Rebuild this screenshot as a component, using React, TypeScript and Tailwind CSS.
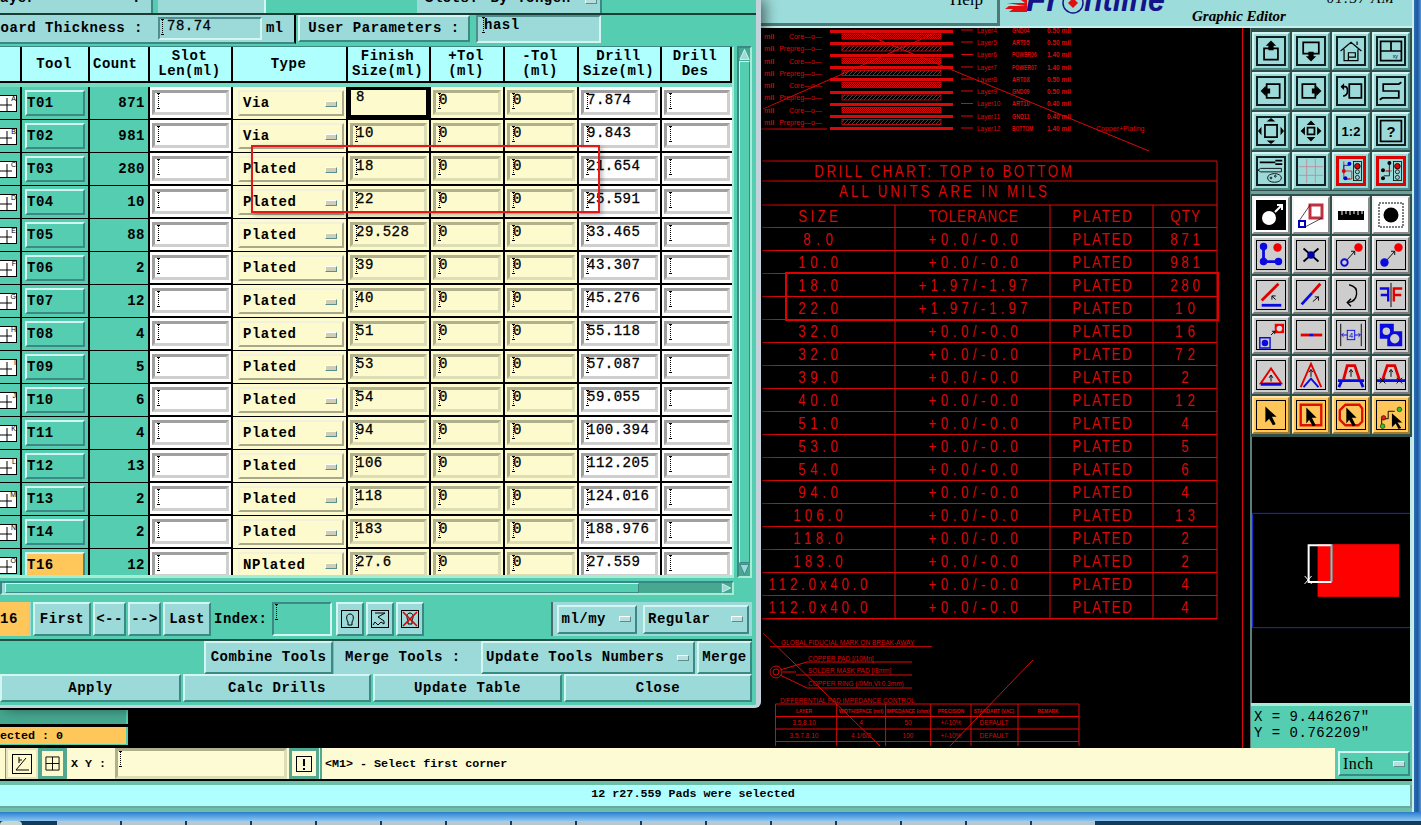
import type { ReactNode } from "react";

const RED = "#dc0808";
const BLUE = "#0a0ae0";

const raised = "border-2 border-t-[#d4f6f2] border-l-[#d4f6f2] border-b-[#3c8884] border-r-[#3c8884]";
const teal = "bg-[#54cdb0]";
const btnBg = "bg-[#9cd9d9]";

const rows = [
  ["T01", "871", "Via", "8", "7.874"],
  ["T02", "981", "Via", "10", "9.843"],
  ["T03", "280", "Plated", "18", "21.654"],
  ["T04", "10", "Plated", "22", "25.591"],
  ["T05", "88", "Plated", "29.528", "33.465"],
  ["T06", "2", "Plated", "39", "43.307"],
  ["T07", "12", "Plated", "40", "45.276"],
  ["T08", "4", "Plated", "51", "55.118"],
  ["T09", "5", "Plated", "53", "57.087"],
  ["T10", "6", "Plated", "54", "59.055"],
  ["T11", "4", "Plated", "94", "100.394"],
  ["T12", "13", "Plated", "106", "112.205"],
  ["T13", "2", "Plated", "118", "124.016"],
  ["T14", "2", "Plated", "183", "188.976"],
  ["T16", "12", "NPlated", "27.6", "27.559"],
];

const gridCols = "grid grid-cols-[22px_68px_60px_83px_115px_83px_74px_74px_83px_70px]";
const valueText = "text-[14px] leading-[15px] tracking-[0.5px] [-webkit-text-stroke:0.3px_#000]";

const Caret = () => (
  <svg viewBox="0 0 5 16" className="w-[5px] h-[16px] shrink-0">
    <path d="M2.5 1V15" stroke="#000" strokeDasharray="1 1" />
    <path d="M1 .5h3M1 15.5h3" stroke="#000" />
  </svg>
);

const Menu = ({ light }: { light?: boolean }) => (
  <span className={`block w-[12px] h-[6px] shrink-0 border border-t-white border-l-white border-b-[#5b8f8c] border-r-[#5b8f8c] ${light ? "bg-[#cfcfb8]" : "bg-[#b8dede]"}`} />
);

const Field = ({ value, white, focus }: { value?: string; white?: boolean; focus?: boolean }) => {
  if (focus) {
    return (
      <div className={`flex-1 h-full border-[3px] border-black bg-[#fdfbce] pl-[5px] ${valueText}`}>{value}</div>
    );
  }
  return (
    <div className={`flex-1 h-[25px] my-[3px] mx-[2px] pl-[1px] flex items-start border-[3px] ${white ? "bg-white border-t-[#a0a0a0] border-l-[#a0a0a0] border-b-[#cfcfcf] border-r-[#cfcfcf]" : "bg-[#fdfbce] border-t-[#b0b08c] border-l-[#b0b08c] border-b-[#dedeb4] border-r-[#dedeb4]"}`}>
      <Caret />
      <span className={`${valueText} -ml-[3px]`}>{value}</span>
    </div>
  );
};

const Btn = ({ className, children }: { className: string; children: ReactNode }) => (
  <div className={`${raised} ${btnBg} flex items-center justify-center font-bold text-[14px] tracking-[0.5px] whitespace-nowrap ${className}`}>{children}</div>
);

const HeaderCell = ({ a, b, className = "items-center" }: { a?: string; b?: string; className?: string }) => (
  <div className={`border-r-2 border-black flex flex-col justify-center font-bold text-[14px] leading-[15px] tracking-[0.5px] pr-[2px] ${className}`}>
    {a && <span>{a}</span>}
    {b && <span>{b}</span>}
  </div>
);

const ToolRow = ({ r, i }: { r: string[]; i: number }) => {
  const letter = "ABCDEFGHIJKLMNOP"[i];
  return (
    <div className={`${gridCols} h-[33px] border-b-2 border-black`}>
      <div className={`${teal} border-r-2 border-black flex items-center overflow-hidden`}>
        <div className="relative -ml-[2px] shrink-0 w-[19px] h-[17px] bg-white border border-black flex items-center justify-center">
          <svg viewBox="0 0 17 15" className="w-[17px] h-[15px]"><path d="M8 2V15M1 9H13" stroke="#000" /></svg>
          <span className="absolute right-0 -top-[1px] text-[7px] leading-[8px] font-['Liberation_Sans',sans-serif]">{letter}</span>
        </div>
      </div>
      <div className={`${teal} border-r-2 border-black p-[3px]`}>
        <div className={`${raised} ${r[0] === "T16" ? "bg-[#ffc65a]" : teal} h-full flex items-center pt-[1px] font-bold text-[14px] tracking-[0.5px]`}>{r[0]}</div>
      </div>
      <div className={`${teal} border-r-2 border-black flex items-center justify-end pt-[1px] pr-[3px] font-bold text-[14px] tracking-[0.5px]`}>{r[1]}</div>
      <div className="bg-white border-r-2 border-black flex h-[31px]"><Field white /></div>
      <div className="bg-[#fdfbce] border-r-2 border-black p-[3px] pl-[5px] pr-[2px]">
        <div className="h-full border-2 border-t-[#f2f2dc] border-l-[#f2f2dc] border-b-[#a8a88a] border-r-[#a8a88a] flex items-center justify-between pl-[3px] pt-[1px] pr-[5px] font-bold text-[14px] tracking-[0.5px]">
          <span>{r[2]}</span>
          <Menu light />
        </div>
      </div>
      <div className="bg-[#fdfbce] border-r-2 border-black flex h-[31px]"><Field value={r[3]} focus={i === 0} /></div>
      <div className="bg-[#fdfbce] border-r-2 border-black flex h-[31px]"><Field value="0" /></div>
      <div className="bg-[#fdfbce] border-r-2 border-black flex h-[31px]"><Field value="0" /></div>
      <div className="bg-white border-r-2 border-black flex h-[31px]"><Field value={r[4]} white /></div>
      <div className="bg-white flex h-[31px]"><Field white /></div>
    </div>
  );
};

const Dialog = () => (
  <div className="absolute left-0 top-0 w-[761px] h-[708px] flex flex-col bg-[#54cdb0] border-r-[5px] border-b-[3px] border-r-[#c4d2dc] border-b-[#c4d2dc] rounded-br-[6px] shadow-[4px_0_14px_rgba(0,0,0,0.55)] overflow-hidden text-black">
    <div className="h-[15px] flex border-b-2 border-black/70 overflow-hidden shrink-0">
      <div className={`${btnBg} w-[153px] border-r-2 border-[#3c8884] flex justify-between pr-[10px] font-bold text-[14px] tracking-[0.5px] leading-[16px] -mt-[10px] h-[24px]`}>
        <span>ayer</span><span>:</span>
      </div>
      <div className={`${btnBg} w-[108px] ml-[5px] border-r-2 border-[#d4f6f2]`} />
      <div className={`${btnBg} w-[185px] ml-[151px] border-r-2 border-[#3c8884] flex font-bold text-[14px] tracking-[0.5px] leading-[16px] -mt-[10px] h-[24px] pl-[8px] items-start gap-[12px]`}>
        <span>Slots:</span><span>By Tongen</span>
        <span className="mt-[8px] ml-[2px]"><Menu /></span>
      </div>
    </div>
    <div className="h-[29px] flex shrink-0 items-stretch">
      <div className={`${btnBg} w-[155px] flex items-center font-bold text-[14px] tracking-[0.5px] justify-end pr-[12px] border-b-2 border-[#3c8884] whitespace-nowrap`}>oard Thickness :</div>
      <div className={`${btnBg} w-[141px] flex items-center border-r-2 border-black border-b-2 border-b-[#3c8884]`}>
        <div className="w-[104px] h-[23px] ml-[3px] bg-[#9cd9d9] border-2 border-t-[#4f8e8c] border-l-[#4f8e8c] border-b-[#d4f6f2] border-r-[#d4f6f2] flex items-start">
          <Caret />
          <span className={`${valueText} ml-[2px]`}>78.74</span>
        </div>
        <span className="ml-[4px] font-bold text-[14px]">ml</span>
      </div>
      <Btn className="w-[172px] h-[27px] ml-[2px]">User Parameters :</Btn>
      <div className={`${btnBg} ml-[6px] w-[125px] h-[28px] border-2 border-t-[#4f8e8c] border-l-[#4f8e8c] border-b-[#d4f6f2] border-r-[#d4f6f2] flex items-start pl-[3px]`}>
        <Caret />
        <span className="text-[14px] font-bold leading-[16px] tracking-[0.5px] -ml-[2px]">hasl</span>
      </div>
    </div>
    <div className="flex mt-[2px] h-[532px] shrink-0">
      <div className="w-[734px] border-t border-[#3c8884] border-r-2 border-r-[#a8ecd8] border-b-[3px] border-b-[#a8ecd8]">
        <div className={`${gridCols} h-[36px] bg-[#afffff] border-b-2 border-black`}>
          <HeaderCell />
          <HeaderCell a="Tool" />
          <HeaderCell a="Count" className="items-start pl-[3px]" />
          <HeaderCell a="Slot" b="Len(ml)" />
          <HeaderCell a="Type" />
          <HeaderCell a="Finish" b="Size(ml)" />
          <HeaderCell a="+Tol" b="(ml)" />
          <HeaderCell a="-Tol" b="(ml)" />
          <HeaderCell a="Drill" b="Size(ml)" />
          <HeaderCell a="Drill" b="Des" />
        </div>
        <div className="h-[4px] bg-[#74dcc2]" />
        <div className="h-[488px] overflow-hidden">
          {rows.map((r, i) => <ToolRow key={r[0]} r={r} i={i} />)}
        </div>
      </div>
      <div className="w-[15px] ml-[3px] border-2 border-t-[#3c8884] border-l-[#3c8884] border-b-[#a8ecd8] border-r-[#a8ecd8] flex flex-col bg-[#46a890]">
        <svg viewBox="0 0 12 13" className="w-[11px] h-[13px]"><path d="M6 1 11 12H1Z" fill="#9cd9d9" stroke="#d4f6f2" /></svg>
        <div className={`flex-1 ${teal} border border-t-[#d4f6f2] border-l-[#d4f6f2] border-b-[#3c8884] border-r-[#3c8884]`} />
        <svg viewBox="0 0 12 13" className="w-[11px] h-[13px]"><path d="M6 12 11 1H1Z" fill="#9cd9d9" stroke="#3c8884" /></svg>
      </div>
    </div>
    <div className="h-[14px] mt-[3px] w-[734px] shrink-0 flex border-2 border-t-[#3c8884] border-l-[#3c8884] border-b-[#a8ecd8] border-r-[#a8ecd8] bg-[#46a890]">
      <div className="w-[3px] bg-[#9cd9d9]" />
      <div className={`w-[634px] ${teal} border border-t-[#d4f6f2] border-l-[#d4f6f2] border-b-[#3c8884] border-r-[#3c8884]`} />
      <div className="flex-1" />
      <svg viewBox="0 0 12 12" className="w-[11px] h-[10px]"><path d="M1 1 11 6 1 11Z" fill="#9cd9d9" stroke="#d4f6f2" /></svg>
    </div>
    <div className="flex items-stretch h-[35px] w-[752px] mt-[6px] pt-[1px] shrink-0">
      <div className="w-[31px] bg-[#ffc65a] border-r-2 border-[#9cd9d9] flex items-center font-bold text-[14px] tracking-[0.5px]">16</div>
      <Btn className="w-[58px] ml-[2px]">First</Btn>
      <Btn className="w-[33px] ml-[2px]">{"<--"}</Btn>
      <Btn className="w-[33px] ml-[2px]">{"-->"}</Btn>
      <Btn className="w-[48px] ml-[2px]">Last</Btn>
      <div className="w-[58px] ml-[3px] flex items-center font-bold text-[14px] tracking-[0.5px]">Index:</div>
      <div className="w-[60px] border-2 border-t-[#3c8884] border-l-[#3c8884] border-b-[#d4f6f2] border-r-[#d4f6f2] flex items-start"><Caret /></div>
      <div className="ml-[4px] flex gap-[2px]">
        <div className={`${raised} ${btnBg} w-[28px] flex items-center justify-center`}>
          <svg viewBox="0 0 18 18" className="w-[18px] h-[18px]" fill="none" stroke="#000"><rect x=".5" y=".5" width="17" height="17" /><path d="M7 12C5 9 5 4 9 4s4 5 2 8v3H7Z" /></svg>
        </div>
        <div className={`${raised} ${btnBg} w-[28px] flex items-center justify-center`}>
          <svg viewBox="0 0 18 18" className="w-[18px] h-[18px]" fill="none" stroke="#000"><rect x=".5" y=".5" width="17" height="17" /><path d="M4 3H14L7 7 13 11V14L10 12 7 15 4 12 2 15" /></svg>
        </div>
        <div className={`${raised} ${btnBg} w-[28px] flex items-center justify-center`}>
          <svg viewBox="0 0 18 18" className="w-[18px] h-[18px]" fill="none" stroke="#000"><rect x=".5" y=".5" width="17" height="17" /><path d="M7 10C5 7 6 3 9 3s4 4 2 7v4H7Z" /><path d="M2 2 16 16M16 2 2 16" stroke="#e00000" strokeWidth="1.6" /></svg>
        </div>
      </div>
      <div className="flex-1" />
      <div className={`${btnBg} w-[89px] border-l-2 border-black/50 flex items-center justify-center`}>
        <div className={`${raised} w-[80px] h-[29px] flex items-center justify-between pl-[3px] pr-[4px] font-bold text-[14px] tracking-[0.5px]`}>ml/my <Menu /></div>
      </div>
      <div className={`${btnBg} w-[112px] flex items-center justify-center`}>
        <div className={`${raised} w-[106px] h-[29px] flex items-center justify-between pl-[3px] pr-[4px] font-bold text-[14px] tracking-[0.5px]`}>Regular <Menu /></div>
      </div>
    </div>
    <div className="h-[5px] border-b-2 border-black/60 shrink-0 w-[752px]" />
    <div className="flex h-[33px] shrink-0 w-[752px]">
      <div className="w-[204px]" />
      <Btn className="w-[129px]">Combine Tools</Btn>
      <div className={`${btnBg} w-[147px] ml-[1px] flex items-center pl-[11px] font-bold text-[14px] tracking-[0.5px]`}>Merge Tools :</div>
      <div className={`${btnBg} flex-1 flex`}>
        <div className={`${raised} w-[214px] flex items-center justify-between pl-[3px] pr-[4px] font-bold text-[14px] tracking-[0.5px]`}>Update Tools Numbers <Menu /></div>
        <Btn className="flex-1 ml-[2px]">Merge</Btn>
      </div>
    </div>
    <div className="flex h-[28px] gap-[2px] shrink-0 w-[752px]">
      <Btn className="w-[181px]">Apply</Btn>
      <Btn className="w-[188px]">Calc Drills</Btn>
      <Btn className="w-[189px]">Update Table</Btn>
      <Btn className="flex-1">Close</Btn>
    </div>
  </div>
);

const chart: [string, string, string, string][] = [
  ["SIZE", "TOLERANCE", "PLATED", "QTY"],
  ["8.0", "+0.0/-0.0", "PLATED", "871"],
  ["10.0", "+0.0/-0.0", "PLATED", "981"],
  ["18.0", "+1.97/-1.97", "PLATED", "280"],
  ["22.0", "+1.97/-1.97", "PLATED", "10"],
  ["32.0", "+0.0/-0.0", "PLATED", "16"],
  ["32.0", "+0.0/-0.0", "PLATED", "72"],
  ["39.0", "+0.0/-0.0", "PLATED", "2"],
  ["40.0", "+0.0/-0.0", "PLATED", "12"],
  ["51.0", "+0.0/-0.0", "PLATED", "4"],
  ["53.0", "+0.0/-0.0", "PLATED", "5"],
  ["54.0", "+0.0/-0.0", "PLATED", "6"],
  ["94.0", "+0.0/-0.0", "PLATED", "4"],
  ["106.0", "+0.0/-0.0", "PLATED", "13"],
  ["118.0", "+0.0/-0.0", "PLATED", "2"],
  ["183.0", "+0.0/-0.0", "PLATED", "2"],
  ["112.0x40.0", "+0.0/-0.0", "PLATED", "4"],
  ["112.0x40.0", "+0.0/-0.0", "PLATED", "4"],
];

const stackRight = [
  [31, "Layer4", "GND04", "0.50 mil"],
  [43, "Layer5", "ART05", "0.50 mil"],
  [55.5, "Layer6", "POWER06", "1.40 mil"],
  [68, "Layer7", "POWER07", "1.40 mil"],
  [80, "Layer8", "ART08", "0.50 mil"],
  [92, "Layer9", "GND09", "0.50 mil"],
  [104.5, "Layer10", "ART10", "0.40 mil"],
  [117, "Layer11", "GND11", "0.40 mil"],
  [129, "Layer12", "BOTTOM", "1.40 mil"],
] as const;

// plotter lettering: narrow glyphs on a 10px pitch
const Plot = ({ x, y, t }: { x: number; y: number; t: string }) => (
  <text transform={`translate(${x} ${y}) scale(0.78 1)`} textAnchor="middle" textLength={(t.length * 9.9) / 0.78} lengthAdjust="spacing" fontSize="17" fill={RED}>{t}</text>
);

const Gerber = () => (
  <svg viewBox="760 28 490 720" className="w-[490px] h-[720px] shrink-0" fontFamily="'Liberation Sans', sans-serif">
    <defs>
      <pattern id="core" width="2" height="2" patternUnits="userSpaceOnUse"><rect width="1" height="1" fill={RED} /><rect x="1" y="1" width="1" height="1" fill={RED} /></pattern>
      <pattern id="prepreg" width="4" height="4" patternUnits="userSpaceOnUse"><path d="M0 4 4 0" stroke={RED} /></pattern>
    </defs>
    {[31, 43, 55, 67, 79, 92, 104, 116, 128].map((y) => <rect key={y} x="830" y={y - 1} width="123" height="3" fill={RED} />)}
    {[36.5, 48.5, 61, 73, 85, 97.5, 110, 122].map((y, i) => (
      <g key={y}>
        <rect x="842" y={y - 2.5} width="99" height="5" fill={`url(#${i % 2 ? "prepreg" : "core"})`} stroke={RED} strokeWidth="0.8" />
        <text x="764" y={y + 2.5} fontSize="7" fill={RED} fontWeight="bold">mil</text>
        <text x="822" y={y + 2.5} fontSize="7" fill={RED} textAnchor="end">{i % 2 ? "Prepreg" : "Core"}—o—</text>
      </g>
    ))}
    <path d="M760 129H827" stroke={RED} />
    {stackRight.map(([y, a, b, c]) => (
      <g key={a} fontSize="6.5" fill={RED}>
        <path d={`M961 ${y - 1}H973`} stroke={RED} />
        <text x="977" y={y + 1.5}>{a}</text>
        <text x="1012" y={y + 1.5} fontWeight="bold" textLength={b.length * 3.5} lengthAdjust="spacingAndGlyphs">{b}</text>
        <text x="1047" y={y + 1.5} fontWeight="bold">{c}</text>
      </g>
    ))}
    <text x="1096" y="131" fontSize="7" fill={RED}>Copper+Plating</text>
    <path d="M763 109 942 30M855 30 1149 151M1242.5 28V748" stroke={RED} />

    <path d="M762 161H1217V619H762M762 181H1217M762 205H1217M895 205V619M1050 205V619M1153 205V619" stroke={RED} fill="none" />
    {chart.map((_, i) => <path key={i} d={`M762 ${227.5 + i * 23}H1217`} stroke={RED} />)}
    <Plot x={943} y={177} t="DRILL CHART: TOP to BOTTOM" />
    <Plot x={943} y={197} t="ALL UNITS ARE IN MILS" />
    {chart.map((r, i) => (
      <g key={i}>
        <Plot x={818} y={222 + i * 23} t={r[0]} />
        <Plot x={973} y={222 + i * 23} t={r[1]} />
        <Plot x={1102} y={222 + i * 23} t={r[2]} />
        <Plot x={1185} y={222 + i * 23} t={r[3]} />
      </g>
    ))}

    <g fontSize="6.5" fill={RED}>
      <text x="781" y="645">GLOBAL FIDUCIAL MARK ON BREAK-AWAY</text>
      <text x="808" y="661">COPPER PAD [/10Mn]</text>
      <text x="808" y="673">SOLDER MASK PAD [/8mm]</text>
      <text x="808" y="686">COPPER RING (/0Mn,VI:0.3mm)</text>
      <text x="780" y="703">DIFFERENTIAL PAD IMPEDANCE CONTROL</text>
      <g fontSize="4.8" fontWeight="bold" textAnchor="middle">
        <text x="804" y="713">LAYER</text>
        <text x="861" y="713">WIDTH/SPACE (mil)</text>
        <text x="908" y="713">IMPEDANCE (ohm)</text>
        <text x="951" y="713">PRECISION</text>
        <text x="994" y="713">STANDART (VAC)</text>
        <text x="1048" y="713">REMARK</text>
      </g>
      <text x="804" y="725" textAnchor="middle">3,5,8,10</text>
      <text x="861" y="725" textAnchor="middle">4</text>
      <text x="908" y="725" textAnchor="middle">50</text>
      <text x="951" y="725" textAnchor="middle">+/-10%</text>
      <text x="994" y="725" textAnchor="middle">DEFAULT</text>
      <text x="804" y="738" textAnchor="middle">3.5.7.8.10</text>
      <text x="861" y="738" textAnchor="middle">4.1/6/2</text>
      <text x="908" y="738" textAnchor="middle">100</text>
      <text x="951" y="738" textAnchor="middle">+/-10%</text>
      <text x="994" y="738" textAnchor="middle">DEFAULT</text>
    </g>
    <path d="M770 646.7H932M807 662H912M796 675H912M807 688H912M780 670 807 662M783 672H796M780 675 807 688M763 633 880 746M1033 660 950 746" stroke={RED} fill="none" />
    <circle cx="776" cy="672" r="6" stroke={RED} fill="none" />
    <circle cx="776" cy="672" r="3" stroke={RED} fill="none" />
    <path d="M775.5 704H1079V746M775.5 716.5H1079M775.5 729H1079M775.5 741.5H1079M775.5 704V746M836.7 704V746M885.6 704V746M930.7 704V746M971 704V746M1018 704V746" stroke={RED} fill="none" />
  </svg>
);

type Tool = { tone: "teal" | "white" | "gray" | "amber" | "hot"; frame?: boolean; icon: ReactNode };
const blk = { fill: "none", stroke: "#000", strokeWidth: 2 } as const;

const tools: Tool[] = [
  { tone: "teal", frame: true, icon: <g><path d="M7 12H23V25H7Z" {...blk} /><path d="M15 3 21 9H18V14H12V9H9Z" /></g> },
  { tone: "teal", frame: true, icon: <g><path d="M6 5H24V18H6Z" {...blk} /><path d="M15 27 9 21H12V16H18V21H21Z" /></g> },
  { tone: "teal", frame: true, icon: <g fill="none" stroke="#000" strokeWidth="1.4"><path d="M3 15 15 5 27 15M7 13V26H23V13M12 26V17H20V22H12M22 8V4" /></g> },
  { tone: "teal", frame: true, icon: <g><path d="M3 4H27V26H3ZM15 4V15M3 15H27" {...blk} /><text x="17" y="23" fontSize="6" fontFamily="'Liberation Sans'">xy</text></g> },

  { tone: "teal", frame: true, icon: <g><path d="M10 7H25V23H10Z" {...blk} /><path d="M3 15 9 9V12H14V18H9V21Z" /></g> },
  { tone: "teal", frame: true, icon: <g><path d="M5 7H20V23H5Z" {...blk} /><path d="M27 15 21 9V12H16V18H21V21Z" /></g> },
  { tone: "teal", frame: true, icon: <g><path d="M13 7H27V23H13Z" {...blk} /><path d="M4 10H8Q11 10 11 15 11 20 6 21" fill="none" stroke="#000" strokeWidth="2" /><path d="M3 10 7 6V14Z" /></g> },
  { tone: "teal", frame: true, icon: <g fill="none" stroke="#000"><path d="M27 5 24 7H6V15H24V23H5L2 25" strokeWidth="2" /></g> },

  { tone: "teal", frame: true, icon: <g><path d="M8 8H22V22H8Z" {...blk} /><path d="M15 0 20 4H10ZM15 30 20 26H10ZM0 15 4 10V20ZM30 15 26 10V20Z" /></g> },
  { tone: "teal", frame: true, icon: <g><path d="M11 11H19V19H11Z" {...blk} /><path d="M15 3 20 8H10ZM15 27 20 22H10ZM3 15 8 10V20ZM27 15 22 10V20Z" /></g> },
  { tone: "teal", frame: true, icon: <text x="15" y="21" textAnchor="middle" fontSize="15" fontWeight="bold" fontFamily="'Liberation Sans'">1:2</text> },
  { tone: "teal", frame: true, icon: <g><rect x="3" y="3" width="24" height="24" {...blk} /><text x="15" y="22" textAnchor="middle" fontSize="17" fontWeight="bold" fontFamily="'Liberation Sans'">?</text></g> },

  { tone: "teal", frame: true, icon: <g fill="none" stroke="#000"><path d="M2 5H20M20 3H28M20 7H28" strokeWidth="2" /><path d="M3 12H27V16H3L0 14Z" /><ellipse cx="19" cy="23" rx="8" ry="5" /><circle cx="15" cy="23" r="1" /><circle cx="20" cy="21" r="1" /></g> },
  { tone: "teal", frame: true, icon: <path d="M1 10H29M1 20H29M10 1V29M20 1V29" stroke="#c08a98" fill="none" /> },
  { tone: "hot", icon: <g><path d="M6 3V25H14M6 15H16V25H9" fill="none" stroke="#e00000" /><path d="M6 18V8H13" fill="none" stroke="#0000e0" /><circle cx="13" cy="6" r="2.5" fill="#0000e0" /><circle cx="6" cy="15" r="2.5" fill="#e00000" /><circle cx="8" cy="24" r="2.5" fill="#0000e0" /><rect x="18" y="3" width="10" height="24" fill="none" stroke="#000" /><circle cx="23" cy="9" r="3.5" fill="#e00000" stroke="#000" /><circle cx="23" cy="16" r="2.5" fill="none" stroke="#000" /><circle cx="23" cy="23" r="2.5" fill="none" stroke="#000" /></g> },
  { tone: "hot", icon: <g><path d="M13 6V21H6" fill="none" stroke="#000" /><path d="M8 15H13V12M9 15H16" fill="none" stroke="#e00000" /><circle cx="13" cy="5" r="2.5" /><circle cx="5" cy="14" r="2.5" /><circle cx="5" cy="24" r="2.5" /><rect x="18" y="3" width="10" height="24" fill="none" stroke="#000" /><circle cx="23" cy="9" r="3.5" fill="#e00000" stroke="#000" /><circle cx="23" cy="16" r="2.5" fill="none" stroke="#000" /><circle cx="23" cy="23" r="2.5" fill="none" stroke="#000" /></g> },

  { tone: "white", icon: <g><rect width="30" height="30" /><circle cx="13" cy="18" r="7" fill="#fff" /><path d="M19 12 25 6M21 5H26V10" stroke="#fff" strokeWidth="2" fill="none" /></g> },
  { tone: "white", icon: <g><path d="M14 5H26V18H14Z" fill="none" stroke="#c03040" strokeWidth="3" /><path d="M3 21H9V27H3Z" fill="none" stroke="#0000c0" strokeWidth="2" /><path d="M14 5 3 21M26 18 9 27" stroke="#000" strokeWidth=".7" /></g> },
  { tone: "white", icon: <g><path d="M2 11H28V20H2Z" /><path d="M6 11V15M10 11V14M14 11V15M18 11V14M22 11V15M26 11V14" stroke="#fff" /></g> },
  { tone: "white", icon: <g><rect x="3" y="3" width="24" height="24" fill="none" stroke="#000" strokeDasharray="2 1" /><circle cx="15" cy="15" r="7.5" /></g> },

  { tone: "gray", frame: true, icon: <g fill={BLUE}><circle cx="7" cy="6" r="4" /><circle cx="7" cy="22" r="4" /><circle cx="23" cy="22" r="4" /><path d="M7 6V22H23" stroke={BLUE} strokeWidth="3" fill="none" /><circle cx="22" cy="7" r="4.5" fill="#f00000" /></g> },
  { tone: "gray", frame: true, icon: <g><path d="M7 8 23 22M23 8 7 22" stroke="#000" strokeWidth="2" /><circle cx="15" cy="15" r="4" fill="#0000a0" /></g> },
  { tone: "gray", frame: true, icon: <g><circle cx="23" cy="7" r="4.5" fill="#f00000" /><circle cx="8" cy="23" r="3.5" fill="none" stroke={BLUE} strokeWidth="2" /><path d="M11 20 19 11M15 11H19V15" stroke="#000" fill="none" /></g> },
  { tone: "gray", frame: true, icon: <g><circle cx="23" cy="7" r="4.5" fill="#f00000" /><circle cx="8" cy="23" r="4.5" fill={BLUE} /><path d="M11 20 19 11M15 11H19V15" stroke="#000" fill="none" /></g> },

  { tone: "gray", frame: true, icon: <g fill="none"><path d="M5 21 23 3" stroke="#e00000" strokeWidth="3" /><path d="M5 26H26" stroke={BLUE} strokeWidth="3" /><path d="M20 20 16 16M16 20V16H20" stroke="#000" /></g> },
  { tone: "gray", frame: true, icon: <g fill="none"><path d="M16 13 25 3" stroke="#e00000" strokeWidth="3" /><path d="M5 25 16 13" stroke={BLUE} strokeWidth="3" /><path d="M17 22 23 17M19 17H23V21" stroke="#000" /></g> },
  { tone: "gray", frame: true, icon: <g fill="none" stroke="#000" strokeWidth="1.5"><path d="M13 4Q22 6 21 14 20 22 12 23" /><path d="M15 19 11 23 15 27" /></g> },
  { tone: "gray", frame: true, icon: <g fill="none"><path d="M15 2V28" stroke="#000" /><path d="M3 8H12V22M4 15H12" stroke={BLUE} strokeWidth="2.5" /><path d="M27 8H18V22M26 15H18" stroke="#e00000" strokeWidth="2.5" /></g> },

  { tone: "gray", frame: true, icon: <g><path d="M19 3H29V13H19Z" fill="#f00000" /><circle cx="24" cy="8" r="3" fill="#ddd" /><path d="M3 18H14V29H3Z" fill="none" stroke={BLUE} strokeWidth="1.5" /><circle cx="8.5" cy="23.5" r="3.5" fill={BLUE} /><path d="M15 15 19 11M16 11H19V14" stroke="#000" fill="none" /></g> },
  { tone: "gray", frame: true, icon: <g><path d="M4 15H13" stroke="#e00000" strokeWidth="3" /><path d="M13 15H18" stroke={BLUE} strokeWidth="3" /><path d="M18 15H27" stroke="#e00000" strokeWidth="3" /></g> },
  { tone: "gray", frame: true, icon: <g fill="none" stroke={BLUE}><path d="M4 3V27M26 3V27" stroke="#000" /><path d="M5 15H11M19 15H25M7 13 5 15 7 17M23 13 25 15 23 17" /><rect x="11" y="10" width="8" height="10" /><text x="15" y="18" textAnchor="middle" fontSize="8" fontFamily="'Liberation Sans'" fill={BLUE} stroke="none">4</text></g> },
  { tone: "gray", frame: true, icon: <g><path d="M3 3H18V11H27V27H11V19H3Z" fill={BLUE} /><circle cx="10" cy="11" r="4" fill="#ccc" /><circle cx="19" cy="19" r="5" fill="#ccc" /></g> },

  { tone: "gray", frame: true, icon: <g fill="none"><path d="M4 24 15 8 26 24Z" stroke="#e00000" strokeWidth="2" /><path d="M4 25H26" stroke={BLUE} strokeWidth="3" /><path d="M15 22V16M13 18 15 15 17 18" stroke="#000" /></g> },
  { tone: "gray", frame: true, icon: <g fill="none"><path d="M4 28 15 3 26 28" stroke="#e00000" strokeWidth="2" /><path d="M7 28 15 19 23 28" stroke={BLUE} strokeWidth="2" /><path d="M15 17V10M13 12 15 9 17 12" stroke="#000" /></g> },
  { tone: "gray", frame: true, icon: <g fill="none"><path d="M7 20 11 5H19L24 20" stroke="#e00000" strokeWidth="3" /><path d="M1 21H29M5 21 2 28M25 21 28 28" stroke={BLUE} strokeWidth="3" /><path d="M15 17V10M13 12 15 9 17 12" stroke="#000" /></g> },
  { tone: "gray", frame: true, icon: <g fill="none"><path d="M6 20 11 5H19L24 20" stroke="#e00000" strokeWidth="3" /><path d="M0 21H30" stroke={BLUE} strokeWidth="3" /><path d="M15 17V10M13 12 15 9 17 12M3 18 9 24M9 18 3 24M21 18 27 24M27 18 21 24" stroke="#000" /></g> },

  { tone: "amber", frame: true, icon: <path d="M9 6 21 17H16L20 25 17 26 13 19 9 23Z" /> },
  { tone: "amber", frame: true, icon: <g><path d="M4 4H26V26H4Z" fill="none" stroke="#e01000" strokeWidth="2.5" /><path d="M10 7 21 18H16L20 26 17 27 13 20 10 24Z" /></g> },
  { tone: "amber", frame: true, icon: <g><path d="M9 4H24L27 8V22L23 26H9L3 20V10Z" fill="none" stroke="#e01000" strokeWidth="2.5" /><path d="M10 7 21 18H16L20 26 17 27 13 20 10 24Z" /></g> },
  { tone: "amber", frame: true, icon: <g><path d="M5 27V19H12V11H19" fill="none" stroke="#000" /><circle cx="24" cy="9" r="2.5" fill="#30c030" stroke="#000" strokeWidth=".5" /><circle cx="7" cy="18" r="2.5" fill="#d02020" stroke="#000" strokeWidth=".5" /><circle cx="6" cy="27" r="2.5" fill="#30c030" stroke="#000" strokeWidth=".5" /><path d="M16 13 27 23H22L26 29 23 30 20 24 16 28Z" /></g> },
];

const toneClass = {
  teal: "bg-[#9cd9d9] border-t-[#d4f6f2] border-l-[#d4f6f2] border-b-[#4f8e8c] border-r-[#4f8e8c]",
  white: "bg-white border-t-[#f4f4f4] border-l-[#f4f4f4] border-b-[#8a8a8a] border-r-[#8a8a8a]",
  gray: "bg-[#cdcdcd] border-t-[#f4f4f4] border-l-[#f4f4f4] border-b-[#7a7a7a] border-r-[#7a7a7a]",
  amber: "bg-[#ffc65a] border-t-[#ffe6b0] border-l-[#ffe6b0] border-b-[#a57a2a] border-r-[#a57a2a]",
  hot: "bg-[#9cd9d9] border-t-[#d4f6f2] border-l-[#d4f6f2] border-b-[#4f8e8c] border-r-[#4f8e8c]",
};

const innerFrame = {
  teal: "border-2 border-[#102020]",
  white: "",
  gray: "border border-black",
  amber: "border border-black",
  hot: "border-[3px] border-[#e00000]",
};

const ToolBtn = ({ t }: { t: Tool }) => (
  <div className={`w-[38px] h-[38px] border-2 flex items-center justify-center ${toneClass[t.tone]}`}>
    <div className={`w-[30px] h-[30px] ${innerFrame[t.tone]} flex items-center justify-center`}>
      <svg viewBox="0 0 30 30" className="w-full h-full">{t.icon}</svg>
    </div>
  </div>
);

const RightPanel = () => (
  <div className="w-[162px] shrink-0 flex flex-col bg-[#2f4f4a] border-l border-[#5b7f78]">
    <div className="pt-[4px] pl-[1px] grid grid-cols-[repeat(4,38px)] gap-[2px] border-b-[3px] border-[#6ea09a] pb-[1px]">
      {tools.slice(0, 16).map((t, i) => <ToolBtn key={i} t={t} />)}
    </div>
    <div className="pt-[2px] pl-[1px] grid grid-cols-[repeat(4,38px)] gap-[2px] pb-[3px]">
      {tools.slice(16).map((t, i) => <ToolBtn key={i} t={t} />)}
    </div>
    <div className="h-[266px] bg-black shrink-0 border-l border-[#5b7f78] border-r-2 border-r-[#bfe8e0]">
      <svg viewBox="1251 437 159 266" className="w-full h-full">
        <path d="M1251.5 513H1410M1251.5 628H1410M1251.5 513V628" stroke="#1a2ad0" fill="none" />
        <rect x="1317" y="544" width="82" height="53" fill="#ff0000" />
        <path d="M1331 545H1308V582H1331" stroke="#fff" strokeWidth="2" fill="none" />
        <path d="M1331 544V582" stroke="#40e0e0" strokeWidth="2" />
        <path d="M1304 576 1311 584M1311 576 1304 584" stroke="#fff" />
      </svg>
    </div>
    <div className={`flex-1 ${teal} border-t-[3px] border-[#a8ecd8] pl-[3px] pt-[3px] text-[14px] leading-[16px] tracking-[0.5px]`}>
      <div>X = 9.446267"</div>
      <div>Y = 0.762209"</div>
    </div>
  </div>
);

const tabs = Array.from({ length: 16 }, (_, i) => i);

export default function App() {
  return (
    <div className="relative w-[1421px] h-[825px] overflow-hidden bg-black font-['Liberation_Mono',monospace] text-black">
      <div className="flex h-[812px]">
        <div className="w-[1412px] flex flex-col">
          {/* title strip */}
          <div className="h-[28px] shrink-0 flex bg-[#9cdcda] border-b-2 border-[#c4f0ee] overflow-hidden">
            <div className="w-[240px] ml-[760px] border-r-[3px] border-b-[3px] border-r-[#4c7a78] border-b-[#4c7a78] flex justify-end pr-[14px]">
              <span className="font-['Liberation_Serif',serif] text-[17px] leading-[17px] -mt-[9px]">Help</span>
            </div>
            <svg viewBox="0 0 164 26" className="w-[164px] h-[26px] ml-[5px] shrink-0" fontFamily="'Liberation Sans', sans-serif">
              <path d="M2 3H20L16 0H22V12H4L8 9H0L4 6H20" fill="#e01010" />
              <text x="21" y="11" fontSize="33" fontWeight="bold" fontStyle="italic" fill="#14148a">Fr</text>
              <circle cx="68" cy="3" r="10" fill="#9cdcda" stroke="#14148a" strokeWidth="1.5" />
              <path d="M68 -2 73 3 68 8 63 3Z" fill="#e01010" />
              <text x="79" y="11" fontSize="33" fontWeight="bold" fontStyle="italic" fill="#14148a" textLength="81" lengthAdjust="spacingAndGlyphs">ntline</text>
            </svg>
            <div className="ml-[23px] pt-[7px] font-['Liberation_Serif',serif] italic font-bold text-[15px] leading-[18px] whitespace-nowrap">Graphic Editor</div>
            <div className="ml-auto mr-[17px] font-['Liberation_Serif',serif] italic text-[15px] leading-[15px] -mt-[9px] tracking-[1px] whitespace-nowrap">01:37 AM</div>
          </div>
          <div className="h-[720px] shrink-0 flex">
            <div className="w-[760px] flex flex-col justify-end pb-[3px]">
              <div className="w-[128px] flex flex-col">
                <div className="h-[14px] bg-[#46a890] border-r-2 border-[#54cdb0]" />
                <div className="h-[3px]" />
                <div className="h-[18px] bg-[#ffc65a] border-r-2 border-[#54cdb0] border-b border-b-[#54cdb0] font-bold text-[11.7px] leading-[18px] overflow-hidden whitespace-nowrap">ected : 0</div>
              </div>
            </div>
            <Gerber />
            <RightPanel />
          </div>
          {/* prompt bar */}
          <div className="h-[33px] shrink-0 flex bg-[#fdfbd4] border-b-2 border-black">
            <div className="flex bg-[#54a88f] items-stretch pr-[1px] gap-[1px]">
              <div className="w-[5px] bg-[#fdfbce]" />
              <div className="w-[32px] bg-[#fdfbce] border-2 border-[#e4e4c0] flex items-center justify-center">
                <svg viewBox="0 0 20 20" className="w-[20px] h-[20px]" fill="none" stroke="#000"><rect x=".5" y=".5" width="19" height="19" /><path d="M4 16 14 4M4 16H17M7 6 10 6M7 3V9" /></svg>
              </div>
              <div className="w-[27px] bg-[#fdfbce] border-[3px] border-[#54a88f] flex items-center justify-center">
                <svg viewBox="0 0 16 16" className="w-[15px] h-[15px]" fill="none" stroke="#000"><path d="M1 1H15V15H1ZM8 1V15M1 8H15" /></svg>
              </div>
            </div>
            <div className="w-[48px] flex items-center pl-[4px] pt-[2px] font-bold text-[11.7px] whitespace-nowrap">X Y :</div>
            <div className="w-[172px] border-[3px] border-t-[#b0b08c] border-l-[#b0b08c] border-b-[#dedeb4] border-r-[#dedeb4] flex items-start"><Caret /></div>
            <div className="w-[30px] ml-[2px] border-[3px] border-[#54a88f] flex items-center justify-center">
              <svg viewBox="0 0 16 16" className="w-[16px] h-[16px]" fill="none" stroke="#000"><rect x=".5" y=".5" width="15" height="15" /><path d="M8 3V10M8 12V14" strokeWidth="2" /></svg>
            </div>
            <div className="flex-1 ml-[1px] flex items-center pl-[3px] pt-[2px] font-bold text-[11.7px] border-l-2 border-[#54a88f]">{"<M1> - Select first corner"}</div>
            <div className={`w-[77px] ${teal} p-[3px] pr-[2px]`}>
              <div className={`${raised} h-full flex items-center justify-between pl-[3px] pr-[3px] font-['Liberation_Serif',serif] text-[16px] tracking-[0.5px]`}>Inch <Menu /></div>
            </div>
          </div>
          {/* status */}
          <div className="h-[31px] shrink-0 bg-[#6cc0a8] pt-[4px] pb-[4px]">
            <div className="h-full bg-[#afffff] border-b-2 border-r-2 border-[#6ca8a0] flex items-center justify-center font-bold text-[11.7px] pb-[1px] pr-[24px]">12 r27.559 Pads were selected</div>
          </div>
        </div>
        <div className="w-[9px] bg-linear-to-r from-[#2a6cb4] via-[#1f5aa0] to-[#4f96d8] border-l-2 border-[#c8eee8]" />
      </div>
      <div className="h-[9px] bg-linear-to-b from-[#2a7cd0] to-[#8cc8f0]" />
      <div className="h-[4px] flex bg-[#143a5c]">
        <div className="w-[22px] mr-[35px] rounded-t-full bg-[#c8d8d0]" />
        <div className="flex gap-[2px]">
          {tabs.map((t) => <div key={t} className="w-[63px] bg-[#b8c8d2]" />)}
        </div>
      </div>
      <Dialog />
      {/* hand drawn markup boxes */}
      <div className="absolute left-[251px] top-[145px] w-[349px] h-[68px] border-2 border-[#e41818] shadow-[2px_2px_5px_rgba(0,0,0,0.3)]" />
      <div className="absolute left-[785px] top-[272px] w-[434px] h-[49px] border-2 border-[#e00000]" />
    </div>
  );
}
